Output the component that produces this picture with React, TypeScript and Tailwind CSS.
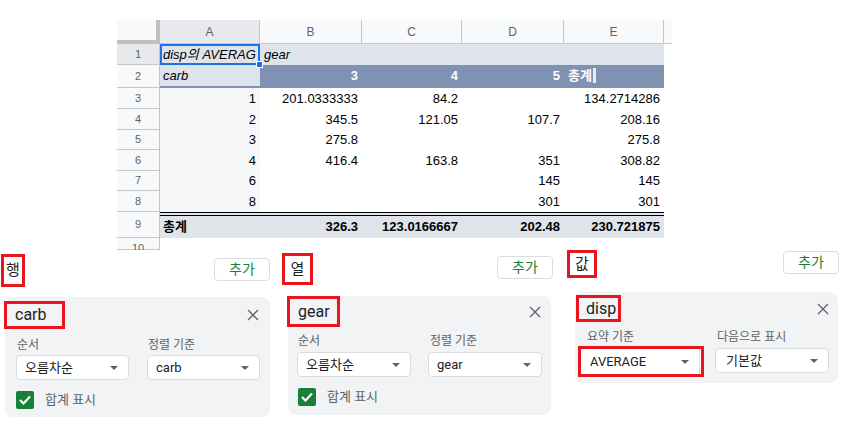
const CELL = "font-['Liberation_Sans','Noto_Sans_CJK_KR',sans-serif]";
const UI = "font-['Roboto','Noto_Sans_CJK_KR',sans-serif]";

const W = ["w-[100px]", "w-[102px]", "w-[100px]", "w-[102px]", "w-[100px]"];
const H = ["h-[21px]", "h-[21px]", "h-[20px]", "h-[21px]", "h-[20px]", "h-[21px]"];

const body = [
  ["1", "201.0333333", "84.2", "", "134.2714286"],
  ["2", "345.5", "121.05", "107.7", "208.16"],
  ["3", "275.8", "", "", "275.8"],
  ["4", "416.4", "163.8", "351", "308.82"],
  ["6", "", "", "145", "145"],
  ["8", "", "", "301", "301"],
];
const totals = ["326.3", "123.0166667", "202.48", "230.721875"];

function RowHead({ n, h, sel, top }: { n: string; h: string; sel?: boolean; top?: boolean }) {
  return (
    <div
      className={`w-[43px] shrink-0 ${h} border-r border-b border-[#c4c7c5] flex justify-center text-[11px] text-[#5f6368] ${
        top ? "items-start pt-[2px]" : "items-center"
      } ${sel ? "bg-[#e7e9ec]" : "bg-[#f8f9fa]"}`}
    >
      {n}
    </div>
  );
}

function Sheet() {
  return (
    <div className={`ml-[117px] mt-[20px] h-[230px] w-[555px] overflow-hidden text-[13px] text-black ${CELL}`}>
      {/* column letters */}
      <div className="flex h-[24px]">
        <div className="w-[43px] h-[24px] bg-[#f8f9fa] border-r-[4px] border-b-[4px] border-[#bfbfbf]" />
        {["A", "B", "C", "D", "E"].map((c, i) => (
          <div
            key={c}
            className={`${W[i]} h-[24px] border-r border-b border-[#c4c7c5] flex items-center justify-center text-[12px] text-[#5f6368] ${
              i === 0 ? "bg-[#e7e9ec]" : "bg-[#f8f9fa]"
            }`}
          >
            {c}
          </div>
        ))}
        <div className="w-[8px] h-[24px] bg-[#f8f9fa] border-b border-[#c4c7c5]" />
      </div>

      {/* row 1 */}
      <div className="flex h-[21px]">
        <RowHead n="1" h="h-[21px]" sel />
        <div className={`${W[0]} relative bg-[#dfe3ea] flex items-center pl-[3px] italic whitespace-nowrap`}>
          <span>disp의 AVERAG</span>
          <div className="absolute inset-0 border-2 border-[#1a73e8]" />
          <div className="absolute -right-[3px] -bottom-[3px] w-[7px] h-[7px] bg-[#1a73e8] border border-white" />
        </div>
        <div className={`${W[1]} bg-[#dfe3ea] flex items-center pl-[4px] italic`}>gear</div>
        <div className={`${W[2]} bg-[#dfe3ea]`} />
        <div className={`${W[3]} bg-[#dfe3ea]`} />
        <div className={`${W[4]} bg-[#dfe3ea]`} />
      </div>

      {/* row 2 */}
      <div className="flex h-[23px]">
        <RowHead n="2" h="h-[23px]" />
        <div className={`${W[0]} bg-[#dfe3ea] border-b-2 border-[#8092b1] flex items-center pl-[3px] italic`}>carb</div>
        {["3", "4", "5"].map((v, i) => (
          <div
            key={v}
            className={`${W[i + 1]} bg-[#8092b1] border-b-2 border-[#8092b1] flex items-center justify-end pr-[4px] font-bold text-white`}
          >
            {v}
          </div>
        ))}
        <div className={`${W[4]} bg-[#8092b1] border-b-2 border-[#8092b1] flex items-center pl-[4px] font-bold text-white`}>
          총계
          <span className="ml-[1px] w-[3px] h-[15px] bg-[#e8ecf3]" />
        </div>
      </div>

      {/* data rows */}
      {body.map((r, ri) => (
        <div key={ri} className={`flex ${H[ri]}`}>
          <RowHead n={String(ri + 3)} h={H[ri]} />
          {r.map((v, ci) => (
            <div
              key={ci}
              className={`${W[ci]} flex items-center justify-end pr-[4px] ${ci === 0 ? "bg-[#f6f7f9]" : ""}`}
            >
              {v}
            </div>
          ))}
        </div>
      ))}

      {/* total row */}
      <div className="flex h-[26px]">
        <RowHead n="9" h="h-[26px]" />
        <div className={`${W[0]} bg-[#dfe3ea] border-t-[4px] border-double border-black flex items-center pl-[3px] font-bold`}>
          총계
        </div>
        {totals.map((v, i) => (
          <div
            key={v}
            className={`${W[i + 1]} bg-[#dfe3ea] border-t-[4px] border-double border-black flex items-center justify-end pr-[4px] font-bold`}
          >
            {v}
          </div>
        ))}
      </div>

      <div className="flex h-[12px]">
        <RowHead n="10" h="h-[12px]" top />
      </div>
    </div>
  );
}

function Caret() {
  return (
    <svg width="8" height="4" viewBox="0 0 8 4" className="shrink-0">
      <path d="M0 0H8L4 4Z" fill="#5f6368" />
    </svg>
  );
}

function Close() {
  return (
    <svg width="12" height="12" viewBox="0 0 12 12" className="shrink-0">
      <path d="M1 1L11 11M11 1L1 11" stroke="#5f6368" strokeWidth="1.3" />
    </svg>
  );
}

function Select({ label, className = "" }: { label: string; className?: string }) {
  return (
    <div
      className={`h-[25px] bg-white border border-[#dadce0] rounded-[4px] flex items-center justify-between pl-[8px] pr-[10px] text-[13px] text-[#202124] ${className}`}
    >
      <span>{label}</span>
      <Caret />
    </div>
  );
}

function AddButton({ className }: { className: string }) {
  return (
    <div
      className={`w-[56px] h-[23px] bg-white border border-[#dadce0] rounded-[4px] flex items-center justify-center text-[14px] text-[#188038] ${className}`}
    >
      추가
    </div>
  );
}

function Check({ className }: { className: string }) {
  return (
    <div className={`flex items-center gap-[11px] ${className}`}>
      <div className="w-[18px] h-[18px] rounded-[2px] bg-[#188038] flex items-center justify-center">
        <svg width="12" height="10" viewBox="0 0 12 10">
          <path d="M1 5L4.5 8.5L11 1.5" stroke="white" strokeWidth="2.2" fill="none" />
        </svg>
      </div>
      <span className="text-[13px] text-[#5f6368]">합계 표시</span>
    </div>
  );
}

const RED = "border-[3px] border-[#e8141e] flex items-center";
const TITLE = "text-[16px] text-[#202124]";
const LABEL = "text-[12px] leading-[16px] text-[#5f6368]";

export default function App() {
  return (
    <div className={`w-[845px] h-[424px] bg-white overflow-hidden ${UI}`}>
      <Sheet />
      <div className="h-[8px]" />

      <div className="flex -mt-[8px]">
        {/* 행 */}
        <div className="w-[282px] shrink-0">
          <div className="flex justify-between items-start pr-[12px]">
            <div className={`${RED} justify-center ml-[1px] mt-[4px] w-[24px] h-[33px] text-[15px] text-[#202124]`}>행</div>
            <AddButton className="mt-[8px]" />
          </div>
          <div className="ml-[5px] mt-[10px] w-[265px] h-[120px] rounded-[8px] bg-[#f1f3f4] pt-[4px]">
            <div className="flex items-center justify-between pr-[11px]">
              <div className={`${RED} ${TITLE} -ml-[1px] w-[61px] h-[28px] pl-[8px]`}>carb</div>
              <Close />
            </div>
            <div className="grid grid-cols-[113px_113px] gap-x-[18px] pl-[11px] mt-[8px]">
              <div className={`${LABEL} pl-[1px]`}>순서</div>
              <div className={`${LABEL} pl-[1px]`}>정렬 기준</div>
              <Select label="오름차순" className="mt-[2px]" />
              <Select label="carb" className="mt-[2px]" />
            </div>
            <Check className="mt-[10px] pl-[11px]" />
          </div>
        </div>

        {/* 열 */}
        <div className="w-[283px] shrink-0">
          <div className="flex justify-between items-start pr-[12px]">
            <div className={`${RED} justify-center mt-[3px] w-[31px] h-[32px] text-[15px] text-[#202124]`}>열</div>
            <AddButton className="mt-[6px]" />
          </div>
          <div className="ml-[6px] mt-[11px] w-[263px] h-[119px] rounded-[8px] bg-[#f1f3f4]">
            <div className="flex items-center justify-between pr-[10px]">
              <div className={`${RED} ${TITLE} -ml-[1px] w-[53px] h-[31px] pl-[8px]`}>gear</div>
              <Close />
            </div>
            <div className="grid grid-cols-[114px_114px] gap-x-[17px] pl-[9px] mt-[6px]">
              <div className={`${LABEL} pl-[1px]`}>순서</div>
              <div className={`${LABEL} pl-[2px]`}>정렬 기준</div>
              <Select label="오름차순" className="mt-[3px]" />
              <Select label="gear" className="mt-[3px]" />
            </div>
            <Check className="mt-[10px] pl-[10px]" />
          </div>
        </div>

        {/* 값 */}
        <div className="flex-1">
          <div className="flex justify-between items-start pr-[6px]">
            <div className={`${RED} justify-center ml-[2px] w-[30px] h-[28px] text-[15px] text-[#202124]`}>값</div>
            <AddButton className="mt-[1px]" />
          </div>
          <div className="ml-[10px] mt-[14px] w-[263px] h-[91px] rounded-[8px] bg-[#f1f3f4] pt-[3px]">
            <div className="flex items-center justify-between pr-[9px]">
              <div className={`${RED} ${TITLE} ml-[1px] w-[45px] h-[27px] pl-[7px]`}>disp</div>
              <Close />
            </div>
            <div className="grid grid-cols-[126px_114px] gap-x-[11px] pl-[3px] mt-[7px] items-start">
              <div className={`${LABEL} pl-[9px]`}>요약 기준</div>
              <div className={`${LABEL} pl-[2px]`}>다음으로 표시</div>
              <div className="mt-[1px] h-[31px] border-[3px] border-[#e8141e] bg-white">
                <div className="h-full mr-[1px] border-r border-[#dadce0] flex items-center justify-between pl-[9px] pr-[10px] text-[13px] text-[#202124]">
                  <span>AVERAGE</span>
                  <Caret />
                </div>
              </div>
              <Select label="기본값" className="mt-[3px] pl-[10px]" />
            </div>
          </div>
        </div>
      </div>
    </div>
  );
}
